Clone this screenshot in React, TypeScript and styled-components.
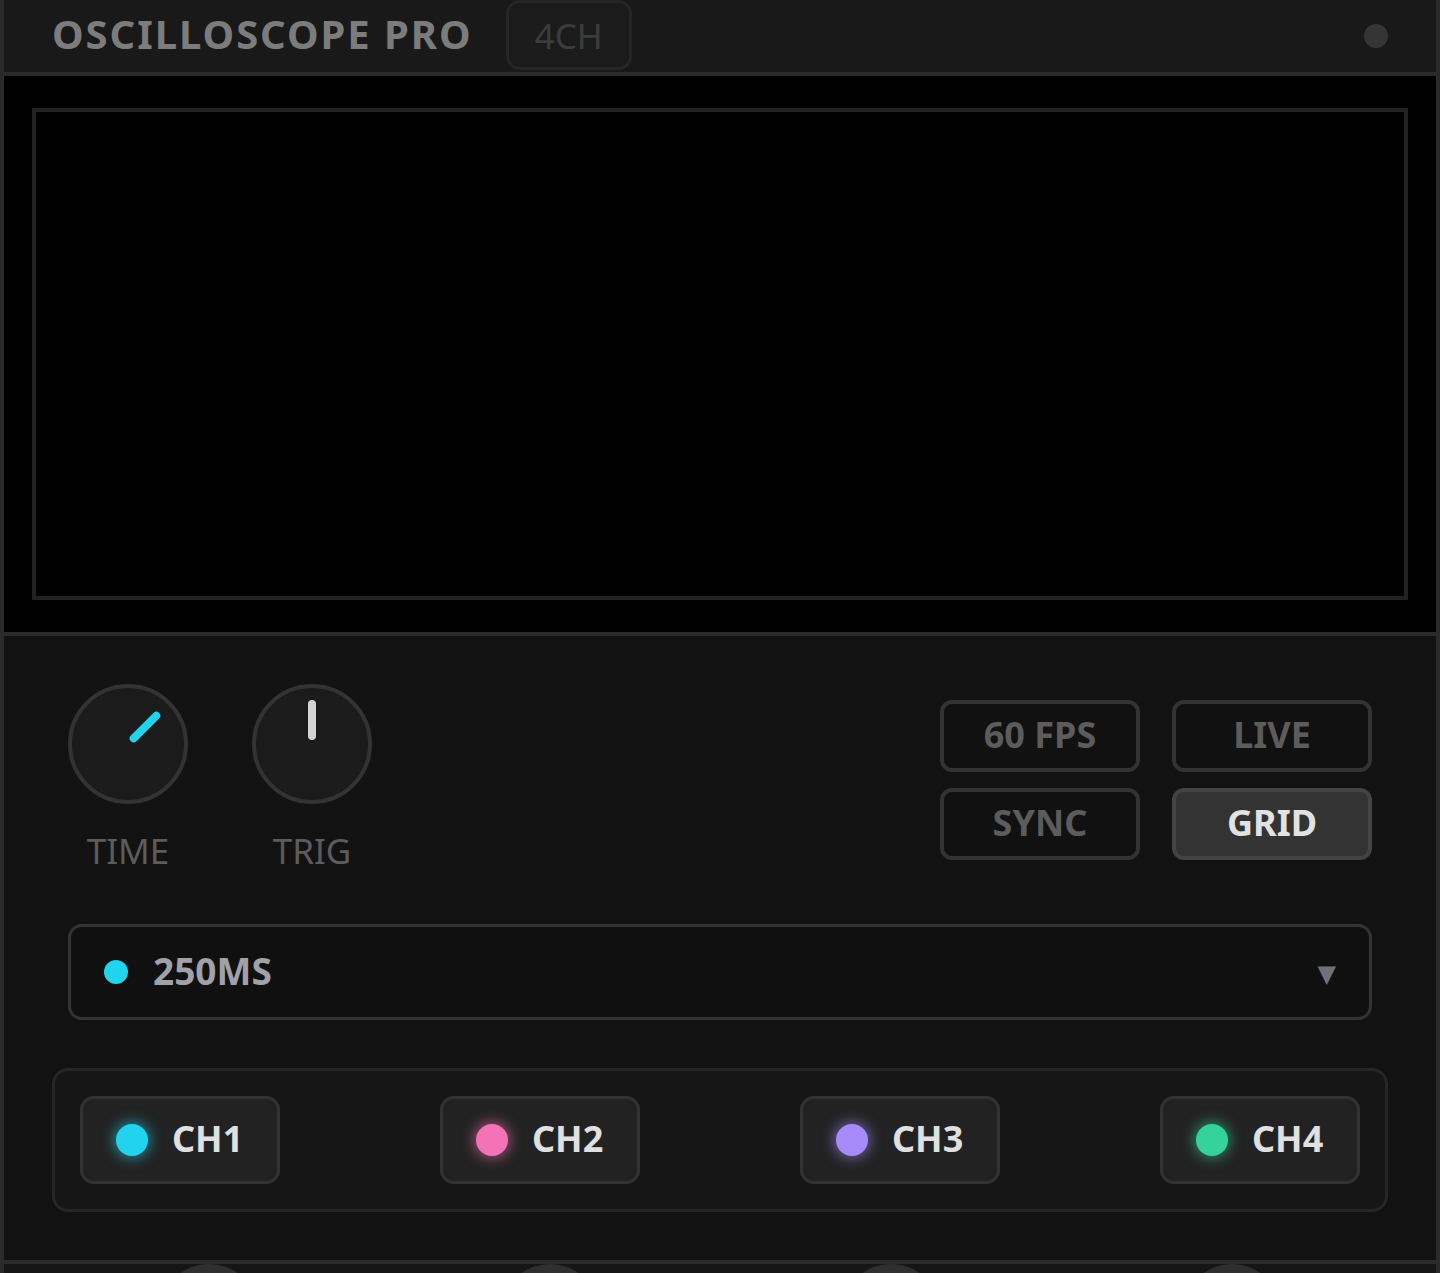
import { FC } from "react";
import styled, { createGlobalStyle, css } from "styled-components";

const channels = [
  { name: "CH1", color: "#22d3ee" },
  { name: "CH2", color: "#f472b6" },
  { name: "CH3", color: "#a78bfa" },
  { name: "CH4", color: "#34d399" },
];

const toggles = [
  { label: "60 FPS", active: false },
  { label: "LIVE", active: false },
  { label: "SYNC", active: false },
  { label: "GRID", active: true },
];

const knobs = [
  { label: "TIME", angle: 45, color: "#22d3ee" },
  { label: "TRIG", angle: 0, color: "#d4d4d4" },
];

const App: FC = () => {
  return (
    <>
      <GlobalStyle />
      <Shell>
        <Header>
          <Title>OSCILLOSCOPE PRO</Title>
          <Badge>4CH</Badge>
          <StatusDot />
        </Header>

        <Screen>
          <Graticule />
        </Screen>

        <Controls>
          <TopRow>
            <Knobs>
              {knobs.map((k) => (
                <KnobColumn key={k.label}>
                  <Knob>
                    <Pointer color={k.color} style={{ transform: `rotate(${k.angle}deg)` }} />
                  </Knob>
                  <KnobLabel>{k.label}</KnobLabel>
                </KnobColumn>
              ))}
            </Knobs>

            <ToggleGrid>
              {toggles.map((t) => (
                <Toggle key={t.label} active={t.active}>
                  {t.label}
                </Toggle>
              ))}
            </ToggleGrid>
          </TopRow>

          <Select>
            <Dot color="#22d3ee" />
            <SelectValue>250MS</SelectValue>
            <Caret>▼</Caret>
          </Select>

          <ChannelPanel>
            {channels.map((ch) => (
              <ChannelButton key={ch.name}>
                <Led color={ch.color} />
                <ChannelName>{ch.name}</ChannelName>
              </ChannelButton>
            ))}
          </ChannelPanel>
        </Controls>

        <LowerRow>
          {channels.map((ch) => (
            <LowerCell key={ch.name}>
              <LowerKnob />
            </LowerCell>
          ))}
        </LowerRow>
      </Shell>
    </>
  );
};

const GlobalStyle = createGlobalStyle`
  * {
    box-sizing: border-box;
  }

  body {
    margin: 0;
    background: #121212;
    font-family: "Noto Sans", "DejaVu Sans", sans-serif;
  }
`;

const Shell = styled.div`
  width: 1440px;
  border: 4px solid #2a2a2a;
  border-top: none;
  background: #121212;
`;

const Header = styled.header`
  height: 76px;
  padding: 0 48px 0 48px;

  display: flex;
  align-items: center;

  background: #191919;
  border-bottom: 4px solid #2a2a2a;
`;

const Title = styled.h1`
  margin: 0 0 6px;

  font-size: 40px;
  font-weight: 700;
  letter-spacing: 1.95px;
  color: #7c7c7c;
`;

const Badge = styled.span`
  height: 70px;
  margin: 0 0 2px 33px;
  padding: 0 26px;

  display: flex;
  align-items: center;

  font-size: 35px;
  font-weight: 400;
  color: #3c3c3c;

  background: #1b1b1b;
  border: 3px solid #262626;
  border-radius: 14px;
`;

const StatusDot = styled.span`
  width: 24px;
  height: 24px;
  margin-left: auto;

  border-radius: 50%;
  background: #353535;
`;

const Screen = styled.section`
  padding: 32px 28px;

  background: #000;
  border-bottom: 4px solid #2a2a2a;
`;

const Graticule = styled.div`
  height: 492px;
  border: 4px solid #222;
`;

const Controls = styled.section`
  padding: 48px;

  display: flex;
  flex-direction: column;
  gap: 48px;

  border-bottom: 4px solid #2a2a2a;
`;

const TopRow = styled.div`
  height: 192px;
  margin: 0 16px;

  display: flex;
  align-items: center;
  justify-content: space-between;
`;

const Knobs = styled.div`
  align-self: flex-start;

  display: flex;
  gap: 64px;
`;

const KnobColumn = styled.div`
  width: 120px;

  display: flex;
  flex-direction: column;
  align-items: center;
  gap: 22px;
`;

const Knob = styled.div`
  position: relative;
  width: 120px;
  height: 120px;

  border-radius: 50%;
  background: #1b1b1b;
  border: 4px solid #333;
`;

const Pointer = styled.span<{ color: string }>`
  position: absolute;
  left: 52px;
  top: 12px;
  width: 8px;
  height: 40px;

  border-radius: 4px;
  transform-origin: 4px 44px;

  ${({ color }) =>
    css`
      background: ${color};
    `}
`;

const KnobLabel = styled.span`
  line-height: 50px;
  font-size: 35px;
  color: #5c5c5c;
`;

const ToggleGrid = styled.div`
  display: grid;
  grid-template-columns: repeat(2, 200px);
  gap: 16px 32px;
`;

const Toggle = styled.button<{ active: boolean }>`
  height: 72px;
  padding: 0 0 3px;

  font-family: inherit;
  font-size: 36px;
  font-weight: 700;

  border-radius: 12px;
  border: 4px solid #333;
  background: #111;
  color: #5c5c5c;

  ${({ active }) =>
    active &&
    css`
      background: #333;
      border-color: #444;
      color: #e2e2e2;
    `}
`;

const Select = styled.div`
  height: 96px;
  margin: 0 16px;
  padding: 0 33px 0 33px;

  display: flex;
  align-items: center;
  gap: 25px;

  background: #101010;
  border: 3px solid #333;
  border-radius: 14px;
`;

const Dot = styled.span<{ color: string }>`
  width: 24px;
  height: 24px;
  flex-shrink: 0;
  border-radius: 50%;
  background: ${({ color }) => color};
`;

const SelectValue = styled.span`
  margin-bottom: 4px;
  font-size: 37px;
  font-weight: 700;
  color: #a1a1aa;
`;

const Caret = styled.span`
  margin-left: auto;
  font-size: 24px;
  color: #71717a;
`;

const ChannelPanel = styled.div`
  padding: 25px;

  display: flex;
  justify-content: space-between;

  background: #161616;
  border: 3px solid #262626;
  border-radius: 16px;
`;

const ChannelButton = styled.button`
  width: 200px;
  height: 88px;
  padding: 0 0 0 33px;

  display: flex;
  align-items: center;
  gap: 24px;

  font-family: inherit;
  background: #222;
  border: 3px solid #333;
  border-radius: 14px;
`;

const Led = styled.span<{ color: string }>`
  width: 32px;
  height: 32px;
  flex-shrink: 0;
  border-radius: 50%;

  ${({ color }) =>
    css`
      background: ${color};
      box-shadow: 0 0 14px 2px ${color}99;
    `}
`;

const ChannelName = styled.span`
  margin-bottom: 3px;
  font-size: 36px;
  font-weight: 700;
  color: #e0e0e0;
`;

const LowerRow = styled.section`
  padding: 0 34px 40px;

  display: grid;
  grid-template-columns: repeat(4, 1fr);

  background: #151515;
`;

const LowerCell = styled.div`
  display: flex;
  justify-content: center;
`;

const LowerKnob = styled.div`
  width: 100px;
  height: 100px;
  border-radius: 50%;
  background: #2f2f2f;
`;

export default App;
